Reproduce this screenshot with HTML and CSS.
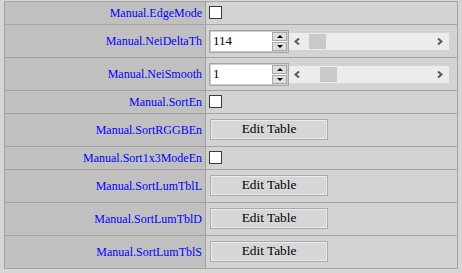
FILE: index.html
```html
<!DOCTYPE html>
<html>
<head>
<meta charset="utf-8">
<link rel="stylesheet" href="styles.css">
</head>
<body>
<div class="table">
  <div class="label short">Manual.EdgeMode</div>
  <div class="value short"><span class="check"></span></div>

  <div class="label tall">Manual.NeiDeltaTh</div>
  <div class="value tall">
    <div class="num"><span class="num-text">114</span><span class="spin"><span class="spin-btn"><span class="tri-up"></span></span><span class="spin-btn"><span class="tri-down"></span></span></span></div>
    <div class="scroll">
      <svg class="arrow left" width="6" height="7" viewBox="0 0 6 7"><polyline points="5,0.5 1.5,3.5 5,6.5" fill="none" stroke="#5a5a5a" stroke-width="2"/></svg>
      <span class="thumb" style="left:20px"></span>
      <svg class="arrow right" width="6" height="7" viewBox="0 0 6 7"><polyline points="1,0.5 4.5,3.5 1,6.5" fill="none" stroke="#5a5a5a" stroke-width="2"/></svg>
    </div>
  </div>

  <div class="label tall">Manual.NeiSmooth</div>
  <div class="value tall">
    <div class="num"><span class="num-text">1</span><span class="spin"><span class="spin-btn"><span class="tri-up"></span></span><span class="spin-btn"><span class="tri-down"></span></span></span></div>
    <div class="scroll">
      <svg class="arrow left" width="6" height="7" viewBox="0 0 6 7"><polyline points="5,0.5 1.5,3.5 5,6.5" fill="none" stroke="#5a5a5a" stroke-width="2"/></svg>
      <span class="thumb" style="left:31px"></span>
      <svg class="arrow right" width="6" height="7" viewBox="0 0 6 7"><polyline points="1,0.5 4.5,3.5 1,6.5" fill="none" stroke="#5a5a5a" stroke-width="2"/></svg>
    </div>
  </div>

  <div class="label short">Manual.SortEn</div>
  <div class="value short"><span class="check"></span></div>

  <div class="label tall">Manual.SortRGGBEn</div>
  <div class="value tall"><span class="btn">Edit Table</span></div>

  <div class="label short">Manual.Sort1x3ModeEn</div>
  <div class="value short"><span class="check"></span></div>

  <div class="label tall">Manual.SortLumTblL</div>
  <div class="value tall"><span class="btn">Edit Table</span></div>

  <div class="label tall">Manual.SortLumTblD</div>
  <div class="value tall"><span class="btn">Edit Table</span></div>

  <div class="label tall">Manual.SortLumTblS</div>
  <div class="value tall"><span class="btn">Edit Table</span></div>
</div>
</body>
</html>
```
FILE: styles.css
```css
html, body {
  margin: 0;
  padding: 0;
  background: #d6d6d6;
}
body {
  padding: 1px 0 0 4px;
  font-family: "Liberation Serif", "Times New Roman", serif;
}
.table {
  display: grid;
  grid-template-columns: 200px 251px;
  gap: 1px;
  padding: 1px;
  background: #a3a3a3;
  width: max-content;
}
.short { height: 22px; }
.tall { height: 32px; }
.label {
  background: #c0c0c0;
  color: #0000ff;
  font-size: 12px;
  display: flex;
  align-items: center;
  justify-content: flex-end;
  padding-right: 3px;
  box-sizing: border-box;
}
.value {
  background: #d3d3d3;
  display: flex;
  align-items: center;
  padding-left: 3px;
  box-sizing: border-box;
}
.check {
  width: 13px;
  height: 13px;
  box-sizing: border-box;
  border: 1px solid #3a3a3a;
  background: #fff;
  margin-bottom: 2px;
}
.num {
  width: 80px;
  height: 23px;
  box-sizing: border-box;
  border: 1px solid #a4a4a4;
  box-shadow: inset 0 0 0 1px #cfcfcf;
  background: #fff;
  display: flex;
  padding: 1px 1px 1px 2px;
}
.num-text {
  flex: 1;
  font-size: 13px;
  color: #000;
  line-height: 17px;
  padding-left: 1px;
}
.spin {
  width: 15px;
  display: flex;
  flex-direction: column;
  gap: 1px;
}
.spin-btn {
  height: 9px;
  box-sizing: border-box;
  border: 1px solid #a8a8a8;
  background: #dedede;
  display: flex;
  align-items: center;
  justify-content: center;
}
.tri-up {
  width: 0; height: 0;
  border-left: 3px solid transparent;
  border-right: 3px solid transparent;
  border-bottom: 3px solid #000;
}
.tri-down {
  width: 0; height: 0;
  border-left: 3px solid transparent;
  border-right: 3px solid transparent;
  border-top: 3px solid #000;
}
.scroll {
  position: relative;
  width: 160px;
  height: 17px;
  background: #ececec;
  display: flex;
  align-items: center;
  justify-content: space-between;
  padding: 0 6px 0 5px;
  box-sizing: border-box;
}
.thumb {
  position: absolute;
  top: 1px;
  width: 17px;
  height: 15px;
  background: #c9c9c9;
}
.btn {
  margin-left: 1px;
  margin-bottom: 2px;
  width: 118px;
  height: 21px;
  box-sizing: border-box;
  border: 1px solid #a9a9a9;
  box-shadow: inset 0 0 0 1px #ebebeb;
  background: #d6d6d6;
  font-size: 13.33px;
  color: #000;
  display: flex;
  align-items: center;
  justify-content: center;
}
```
